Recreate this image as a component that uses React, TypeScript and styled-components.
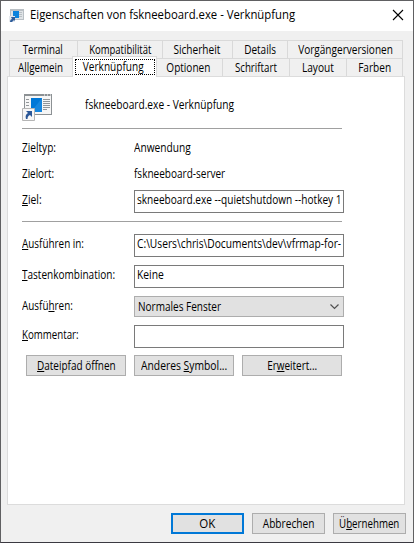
import React from 'react';
import styled, { createGlobalStyle, css } from 'styled-components';

const GlobalStyle = createGlobalStyle`
  * { box-sizing: border-box; }
  body { margin: 0; background: #5b5b5d; }
  #root { width: 414px; height: 543px; }
`;

const Dialog = styled.main`
  display: flex;
  flex-direction: column;
  width: 414px;
  height: 543px;
  overflow: hidden;
  background: #f0f0f0;
  border: 1px solid #606062;
  border-bottom-color: #3b3941;
  font: 12px/16px "Open Sans", "Noto Sans", sans-serif;
  color: #000;
`;

const Caption = styled.span<{ $fit?: number; $center?: boolean }>`
  display: inline-block;
  flex: none;
  white-space: pre;
  transform: scaleX(${p => p.$fit ?? 0.835});
  transform-origin: ${p => (p.$center ? 'center' : 'left')} center;
`;

const Mnemonic = styled.span`
  text-decoration: underline 1px;
  text-underline-offset: 1px;
  text-decoration-skip-ink: none;
`;

const TitleBar = styled.header`
  display: flex;
  flex: none;
  height: 30px;
  padding: 6px 9px 0 8px;
  background: #fff;
`;

const TitleIcon = styled.div`
  display: flex;
  width: 21px;
  padding-top: 1px;
`;

const CloseButton = styled.button`
  display: flex;
  width: 12px;
  height: 12px;
  margin: 2px 0 0 auto;
  padding: 0;
  border: 0;
  background: none;
`;

const TabRow = styled.div<{ $front?: boolean }>`
  display: flex;
  flex: none;
  height: 18px;
  margin: ${p => (p.$front ? '0' : '9px')} 0 0 8px;
  position: relative;
`;

const Tab = styled.button<{ $width: number; $nudge?: number; $active?: boolean }>`
  display: flex;
  flex: none;
  justify-content: center;
  width: ${p => p.$width}px;
  height: 100%;
  padding: 1px ${p => Math.max(0, -(p.$nudge ?? 0) * 2)}px 0 ${p => Math.max(0, (p.$nudge ?? 0) * 2)}px;
  font: inherit;
  color: inherit;
  background: #f0f0f0;
  border: 1px solid #d9d9d9;
  border-width: 1px 0 0 1px;
  &:last-child { border-right-width: 1px; }
  ${p => p.$active && css`
    height: 21px;
    margin: -2px 0 0;
    padding: 2px 1px 2px 2px;
    background: #fff;
    border-right-width: 1px;
    z-index: 1;
    & + button { border-left: 0; }
  `}
`;

const Focus = styled.span`
  display: flex;
  justify-content: center;
  width: 81px;
  height: 16px;
  padding-right: 3px;
  line-height: 13px;
  border: 1px dotted #000;
`;

const Panel = styled.section`
  display: flex;
  flex-direction: column;
  flex: none;
  width: 398px;
  height: 429px;
  margin-left: 6px;
  padding: 17px 0 0 14px;
  background: #fff;
  border: 1px solid #dcdcdc;
`;

const Summary = styled.div`
  display: flex;
  height: 34px;
`;

const FileIcon = styled.div`
  width: 63px;
`;

const SummaryName = styled.div`
  padding-top: 3px;
`;

const Rule = styled.hr`
  flex: none;
  width: 320px;
  height: 1px;
  margin: 0;
  border: 0;
  background: #a0a0a0;
`;

const Divider = styled(Rule)`
  margin-top: 8px;
`;

const Field = styled.div<{ $gap: number; $height: number }>`
  display: flex;
  flex: none;
  height: ${p => p.$height}px;
  margin-top: ${p => p.$gap}px;
`;

const Label = styled.label`
  display: flex;
  flex: none;
  width: 112px;
  padding-top: 2px;
`;

const Value = styled.div`
  padding-top: 2px;
`;

const Input = styled.div`
  display: flex;
  width: 210px;
  padding: 1px 2px 0;
  overflow: hidden;
  border: 1px solid #7a7a7a;
  background: #fff;
`;

const Select = styled.div`
  display: flex;
  justify-content: space-between;
  width: 210px;
  padding: 2px 4px 0 3px;
  border: 1px solid #adadad;
  background: #e1e1e1;
`;

const ButtonRow = styled.div`
  display: flex;
  gap: 8px;
  margin: 7px 0 0 4px;
`;

const Button = styled.button<{ $width: number; $primary?: boolean }>`
  display: flex;
  align-items: flex-start;
  justify-content: center;
  width: ${p => p.$width}px;
  height: 21px;
  padding: ${p => (p.$primary ? 1 : 2)}px 0 0;
  font: inherit;
  color: inherit;
  background: #e1e1e1;
  border: ${p => (p.$primary ? '2px solid #0078d7' : '1px solid #adadad')};
`;

const Footer = styled.footer`
  display: flex;
  justify-content: flex-end;
  gap: 8px;
  padding: 8px 7px 0 0;
`;

const Shortcut = ({ width, height }: { width: number; height: number }) => (
  <svg width={width} height={height} viewBox="0 0 30 27">
    <path d="M2 0H30V21H2Z" fill="#8c9194" />
    <path d="M3 2H29V20H3Z" fill="#f6f6f6" />
    <path d="M22 1h1M25 1h1M28 1h1" stroke="#fff" />
    <path d="M9 4h11v14H9z" fill="#0078d7" />
    <path d="M9 18L20 4v14z" fill="#1686de" />
    <path d="M4 5.500h3M4 8.500h3M4 11.500h3M21 5.500h7M21 7.500h7M21 9.500h7M21 11.500h7M21 13.500h7M21 15.500h4" stroke="#92979a" />
    <path d="M.5 14.500h12v12H.5z" fill="#f7f7f7" stroke="#b5b5b5" />
    <path d="M4 17h6v6l-2-2c-2 1-2.500 2-2.500 4H4c-1-3 0-5 2-6z" fill="#2b5797" />
  </svg>
);

const SmallShortcut = () => (
  <svg width="15" height="14" viewBox="0 0 15 14">
    <path d="M1 1H15V12H1Z" fill="#b9bfc4" />
    <path d="M2 3H14V11H2Z" fill="#dfe3e6" />
    <path d="M4 3h6v7H4z" fill="#0b82dc" />
    <path d="M10 4.500h3M10 6.500h3M10 8.500h3" stroke="#b9bfc4" />
    <path d="M0 8h6v6H0z" fill="#e5e9ee" />
    <path d="M2 9h4v4l-1-1-2 2H1c0-2 1-3 2-3z" fill="#2f5d9b" />
  </svg>
);

const backTabs = [
  { name: 'Terminal', width: 68, fit: 0.81, nudge: -1 },
  { name: 'Kompatibilität', width: 85, fit: 0.79 },
  { name: 'Sicherheit', width: 70, fit: 0.84, nudge: -1 },
  { name: 'Details', width: 55, fit: 0.835 },
  { name: 'Vorgängerversionen', width: 116, fit: 0.838, nudge: 1 },
];

const frontTabs = [
  { name: 'Allgemein', width: 63, fit: 0.815 },
  { name: 'Verknüpfung', width: 85, fit: 0.84, active: true },
  { name: 'Optionen', width: 65, fit: 0.835, nudge: -1 },
  { name: 'Schriftart', width: 67, fit: 0.81 },
  { name: 'Layout', width: 57, fit: 0.845 },
  { name: 'Farben', width: 57, fit: 0.84 },
];

export default function App() {
  return (
    <>
      <GlobalStyle />
      <Dialog>
        <TitleBar>
          <TitleIcon><SmallShortcut /></TitleIcon>
          <Caption $fit={0.944}>Eigenschaften von fskneeboard.exe - Verknüpfung</Caption>
          <CloseButton aria-label="Schließen">
            <svg width="12" height="12" viewBox="0 0 12 12">
              <path d="M1 1L11 11M11 1L1 11" stroke="#000" strokeWidth="1.100" />
            </svg>
          </CloseButton>
        </TitleBar>

        <TabRow>
          {backTabs.map(t => (
            <Tab key={t.name} $width={t.width} $nudge={t.nudge}>
              <Caption $center $fit={t.fit}>{t.name}</Caption>
            </Tab>
          ))}
        </TabRow>
        <TabRow $front>
          {frontTabs.map(t => (
            <Tab key={t.name} $width={t.width} $nudge={t.nudge} $active={t.active}>
              {t.active
                ? <Focus><Caption $center $fit={t.fit}>{t.name}</Caption></Focus>
                : <Caption $center $fit={t.fit}>{t.name}</Caption>}
            </Tab>
          ))}
        </TabRow>

        <Panel>
          <Summary>
            <FileIcon><Shortcut width={30} height={27} /></FileIcon>
            <SummaryName><Caption $fit={0.848}>fskneeboard.exe - Verknüpfung</Caption></SummaryName>
          </Summary>
          <Rule />
          <Field $gap={9} $height={17}>
            <Label><Caption $fit={0.84}>Zieltyp:</Caption></Label>
            <Value><Caption $fit={0.848}>Anwendung</Caption></Value>
          </Field>
          <Field $gap={9} $height={17}>
            <Label><Caption $fit={0.82}>Zielort:</Caption></Label>
            <Value><Caption $fit={0.835}>fskneeboard-server</Caption></Value>
          </Field>
          <Field $gap={9} $height={23}>
            <Label><Caption $fit={0.86}><Mnemonic>Z</Mnemonic>iel:</Caption></Label>
            <Input><Caption $fit={0.84}>skneeboard.exe --quietshutdown --hotkey 1</Caption></Input>
          </Field>
          <Divider />
          <Field $gap={12} $height={23}>
            <Label><Caption $fit={0.825}><Mnemonic>A</Mnemonic>usführen in:</Caption></Label>
            <Input><Caption $fit={0.852}>{'C:\\Users\\chris\\Documents\\dev\\vfrmap-for-'}</Caption></Input>
          </Field>
          <Field $gap={8} $height={23}>
            <Label><Caption $fit={0.835}><Mnemonic>T</Mnemonic>astenkombination:</Caption></Label>
            <Input><Caption $fit={0.86}>Keine</Caption></Input>
          </Field>
          <Field $gap={8} $height={21}>
            <Label><Caption $fit={0.825}>Ausfü<Mnemonic>h</Mnemonic>ren:</Caption></Label>
            <Select>
              <Caption $fit={0.835}>Normales Fenster</Caption>
              <svg width="9" height="17" viewBox="0 0 9 17">
                <path d="M.5 5.500L4.500 9.500L8.500 5.500" fill="none" stroke="#505050" strokeWidth="1.200" />
              </svg>
            </Select>
          </Field>
          <Field $gap={8} $height={23}>
            <Label><Caption $fit={0.81}><Mnemonic>K</Mnemonic>ommentar:</Caption></Label>
            <Input />
          </Field>
          <ButtonRow>
            <Button $width={100}><Caption $center $fit={0.83}><Mnemonic>D</Mnemonic>ateipfad öffnen</Caption></Button>
            <Button $width={100}><Caption $center $fit={0.86}>Anderes <Mnemonic>S</Mnemonic>ymbol...</Caption></Button>
            <Button $width={100}><Caption $center $fit={0.83}>Er<Mnemonic>w</Mnemonic>eitert...</Caption></Button>
          </ButtonRow>
        </Panel>

        <Footer>
          <Button $width={73} $primary><Caption $center $fit={0.96}>OK</Caption></Button>
          <Button $width={73}><Caption $center $fit={0.845}>Abbrechen</Caption></Button>
          <Button $width={73}><Caption $center $fit={0.81}>Ü<Mnemonic>b</Mnemonic>ernehmen</Caption></Button>
        </Footer>
      </Dialog>
    </>
  );
}
